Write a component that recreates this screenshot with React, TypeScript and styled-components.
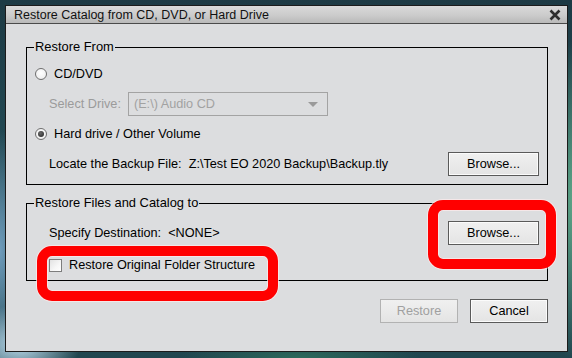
import React from 'react';
import styled, { createGlobalStyle } from 'styled-components';

const GlobalStyle = createGlobalStyle`
  html, body {
    margin: 0;
    height: 100%;
  }
  body {
    overflow: hidden;
    font-family: "Liberation Sans", Arial, sans-serif;
    background:
      radial-gradient(ellipse 60px 40px at 20px 345px, #b9d8ea 0%, rgba(185, 216, 234, 0) 100%),
      radial-gradient(ellipse 30px 120px at 0px 250px, #6f9cbc 0%, rgba(111, 156, 188, 0) 100%),
      radial-gradient(ellipse 40px 160px at 575px 200px, #5fa888 0%, rgba(95, 168, 136, 0) 100%),
      radial-gradient(ellipse 120px 20px at 300px 358px, #2d6a5c 0%, rgba(45, 106, 92, 0) 100%),
      linear-gradient(180deg, #1d3a44 0%, #24505a 60%, #21464f 100%);
  }
`;

const Screen = styled.div`
  width: 572px;
  height: 358px;
  box-sizing: border-box;
  padding: 5px 4px 0 5px;
`;

const Dialog = styled.div`
  position: relative;
  width: 563px;
  height: 347px;
  box-sizing: border-box;
  border: 1px solid #1b1b1b;
  background: #dcdddf;
  display: flex;
  flex-direction: column;
  font-size: 12.7px;
  color: #000;
`;

const TitleBar = styled.div`
  height: 17px;
  flex: none;
  display: flex;
  align-items: center;
  justify-content: space-between;
  padding: 0 5px 0 8px;
  background: linear-gradient(180deg, #dadada 0%, #cbcbcb 55%, #b9b9b9 100%);
  border-bottom: 1px solid #4a4a4a;
  font-size: 12.5px;
  color: #111;
`;

const CloseButton = styled.span`
  display: flex;
  width: 14px;
  height: 14px;
  align-items: center;
  justify-content: center;
`;

const Body = styled.div`
  flex: 1;
  display: flex;
  flex-direction: column;
  padding: 16px 19px 0 20px;
`;

const Group = styled.fieldset<{ $gap: number; $top: number; $bottom: number }>`
  margin: 0;
  min-width: 0;
  border: 1px solid #000;
  padding: ${p => p.$top}px 8px ${p => p.$bottom}px 8px;
  display: flex;
  flex-direction: column;
  gap: ${p => p.$gap}px;
  & + & {
    margin-top: 11px;
  }
`;

const Legend = styled.legend`
  margin-left: -1px;
  padding: 0 1px;
  line-height: 14px;
  font-size: 12.9px;
`;

const Row = styled.div<{ $indent?: number; $height?: number }>`
  height: ${p => p.$height ?? 24}px;
  display: flex;
  align-items: center;
  padding-left: ${p => p.$indent ?? 0}px;
`;

const Label = styled.label<{ $muted?: boolean }>`
  display: flex;
  align-items: center;
  gap: 7px;
  color: ${p => (p.$muted ? '#9b9b9b' : '#000')};
  white-space: pre;
`;

const Fill = styled.span`
  flex: 1;
  white-space: pre;
`;

const RadioDot = styled.span<{ $checked?: boolean }>`
  width: 12px;
  height: 12px;
  box-sizing: border-box;
  border-radius: 50%;
  border: 1px solid #6f6f6f;
  background: radial-gradient(circle at 50% 40%, #ffffff 0%, #f0f0f0 70%, #d6d6d6 100%);
  display: flex;
  align-items: center;
  justify-content: center;
  &::after {
    content: '';
    display: ${p => (p.$checked ? 'block' : 'none')};
    width: 6px;
    height: 6px;
    border-radius: 50%;
    background: radial-gradient(circle at 40% 35%, #6a6a6a 0%, #222 100%);
  }
`;

const CheckBox = styled.span`
  width: 13px;
  height: 13px;
  box-sizing: border-box;
  border: 1px solid #7d7d7d;
  background: linear-gradient(135deg, #e2e2e2 0%, #f7f7f7 60%, #ffffff 100%);
`;

const Select = styled.div`
  margin-left: 7px;
  width: 200px;
  height: 24px;
  box-sizing: border-box;
  border: 1px solid #a3a3a3;
  display: flex;
  align-items: center;
  justify-content: space-between;
  padding: 0 9px 0 5px;
  color: #a2a2a2;
`;

const Arrow = styled.span`
  width: 0;
  height: 0;
  border-left: 5px solid transparent;
  border-right: 5px solid transparent;
  border-top: 5px solid #9a9a9a;
`;

const Button = styled.button<{ $disabled?: boolean; $width: number }>`
  width: ${p => p.$width}px;
  height: 24px;
  padding: 0;
  font-family: inherit;
  font-size: 12.7px;
  color: ${p => (p.$disabled ? '#a0a0a0' : '#000')};
  background: linear-gradient(180deg, #f0f0f0 0%, #e4e4e4 100%);
  border: 1px solid ${p => (p.$disabled ? '#b2b2b2' : '#5a5a5a')};
  box-shadow: ${p => (p.$disabled ? 'none' : 'inset 0 0 0 1px #fbfbfb')};
  border-radius: 0;
`;

const Footer = styled.div`
  margin-top: 18px;
  display: flex;
  justify-content: flex-end;
  gap: 12px;
`;

const Highlight = styled.div<{ $x: number; $y: number; $w: number; $h: number }>`
  position: absolute;
  left: ${p => p.$x}px;
  top: ${p => p.$y}px;
  width: ${p => p.$w}px;
  height: ${p => p.$h}px;
  box-sizing: border-box;
  border: 10px solid #ff0000;
  border-radius: 15px;
  box-shadow: 0 0 0 1px rgba(255, 235, 235, 0.7), inset 0 0 0 1px rgba(255, 235, 235, 0.7);
  pointer-events: none;
`;

const CloseIcon = () => (
  <svg width="12" height="12" viewBox="0 0 12 12">
    <path d="M1.5 1.5 L10.5 10.5 M10.5 1.5 L1.5 10.5" stroke="#2f2f2f" strokeWidth="2.6" strokeLinecap="butt" />
  </svg>
);

const App = () => {
  return (
    <>
      <GlobalStyle />
      <Screen>
        <Dialog>
          <TitleBar>
            <span>Restore Catalog from CD, DVD, or Hard Drive</span>
            <CloseButton>
              <CloseIcon />
            </CloseButton>
          </TitleBar>
          <Body>
            <Group $gap={6} $top={8} $bottom={8}>
              <Legend>Restore From</Legend>
              <Row>
                <Label>
                  <RadioDot />
                  CD/DVD
                </Label>
              </Row>
              <Row $indent={14}>
                <Label $muted>Select Drive:</Label>
                <Select>
                  <span>(E:\) Audio CD</span>
                  <Arrow />
                </Select>
              </Row>
              <Row>
                <Label>
                  <RadioDot $checked />
                  Hard drive / Other Volume
                </Label>
              </Row>
              <Row $indent={14}>
                <Fill>{'Locate the Backup File:  Z:\\Test EO 2020 Backup\\Backup.tly'}</Fill>
                <Button $width={91}>Browse...</Button>
              </Row>
            </Group>
            <Group $gap={11} $top={11} $bottom={6}>
              <Legend>Restore Files and Catalog to</Legend>
              <Row $indent={14}>
                <Fill>{'Specify Destination:  <NONE>'}</Fill>
                <Button $width={91}>Browse...</Button>
              </Row>
              <Row $indent={14} $height={18}>
                <Label>
                  <CheckBox />
                  Restore Original Folder Structure
                </Label>
              </Row>
            </Group>
            <Footer>
              <Button $disabled $width={78}>Restore</Button>
              <Button $width={78}>Cancel</Button>
            </Footer>
          </Body>
          <Highlight $x={31} $y={240} $w={241} $h={55} />
          <Highlight $x={422} $y={194} $w={128} $h={69} />
        </Dialog>
      </Screen>
    </>
  );
};

export default App;
